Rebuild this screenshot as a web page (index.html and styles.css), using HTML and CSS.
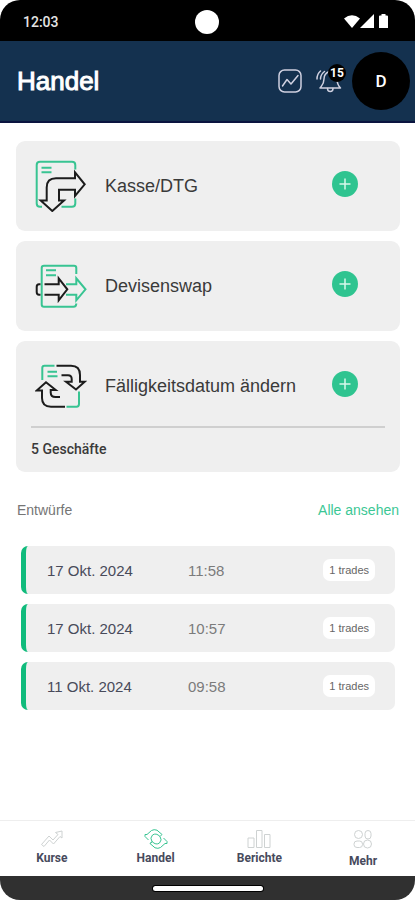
FILE: index.html
```html
<!DOCTYPE html>
<html lang="de">
<head>
<meta charset="utf-8">
<meta name="viewport" content="width=device-width, initial-scale=1">
<title>Handel</title>
<link rel="stylesheet" href="styles.css">
</head>
<body>
<div class="phone">
  <div class="status">
    <span class="clock">12:03</span>
    <span class="camera"></span>
    <svg class="signals" width="46" height="16" viewBox="0 0 46 16" fill="#fff">
      <path d="M0 4.500Q8 -2 16 4.500L8 14Z"/>
      <path d="M30 0V14H16Z"/>
      <path d="M35 2.500Q35 1.500 36 1.500H37.500V0H41.500V1.500H43Q44 1.500 44 2.500V14H35Z"/>
    </svg>
  </div>

  <header class="header">
    <h1>Handel</h1>
    <button class="icon-button" aria-label="Chart">
      <svg width="24" height="24" viewBox="0 0 24 24" fill="none" stroke="#cfd0e0" stroke-width="1.500" stroke-linecap="round" stroke-linejoin="round">
        <rect x="1" y="1" width="22" height="22" rx="5.500"/>
        <path d="M4.500 17L9 10.500L13 15L20 6.500"/>
      </svg>
    </button>
    <button class="icon-button bell" aria-label="Benachrichtigungen">
      <svg width="26" height="24" viewBox="0 0 26 24" fill="none" stroke="#cfd0e0" stroke-width="1.500" stroke-linecap="round" stroke-linejoin="round">
        <path d="M13 2.500C9.500 4 8 7 8 10C8 15 6.500 16 4 19H24.500C22 16.500 21 14.500 21 10"/>
        <path d="M11.500 19.500C11.500 23.500 17 23.500 17 19.500M4.500 2Q1 5 1 10M8.500 2.500Q4.500 5.500 4.500 10"/>
      </svg>
      <span class="badge">15</span>
    </button>
    <button class="avatar">D</button>
  </header>

  <main class="main">
    <section class="cards">
      <article class="card">
        <div class="card-row">
          <svg class="card-icon" width="52" height="52" viewBox="0 0 52 52">
            <path class="green" d="M40.300 9.500V5Q40.300 1.700 37 1.700H5Q1.700 1.700 1.700 5V43.500Q1.700 46.700 5 46.700H7M40.300 38.500V43.500Q40.300 46.700 37 46.700H26.500M6.500 7.700H16.500M6.500 12.300H16.500"/>
            <path class="black" d="M11.700 40.500V27.500Q11.700 18.300 21 18.300H40V12.300L49.700 24.300L40 36V29.700H24V40.500H29L17.300 51L5.700 40.500Z"/>
          </svg>
          <h2>Kasse/DTG</h2>
          <button class="add" aria-label="Kasse/DTG hinzufügen"><svg width="12" height="12" viewBox="0 0 12 12"><path d="M6 0.500V11.500M0.500 6H11.500"/></svg></button>
        </div>
      </article>

      <article class="card">
        <div class="card-row">
          <svg class="card-icon" width="52" height="52" viewBox="0 0 52 52">
            <path class="green" d="M41.300 14V8Q41.300 5.700 39 5.700H9Q6.700 5.700 6.700 8V44.500Q6.700 46.700 9 46.700H38.500Q41.300 46.700 41.300 43.500M11 10.300H21M11 15.300H21"/>
            <path class="green" d="M31 24.300H41.300V18.300L50.500 29.300L41.300 40.300V34.700H31"/>
            <path class="black" d="M9.500 24.300H23.700V18.300L32.300 29.300L23.700 40.300V34.700H9.500M5.500 24.300H4Q1.700 24.300 1.700 27V32Q1.700 34.700 4 34.700H5.500"/>
          </svg>
          <h2>Devisenswap</h2>
          <button class="add" aria-label="Devisenswap hinzufügen"><svg width="12" height="12" viewBox="0 0 12 12"><path d="M6 0.500V11.500M0.500 6H11.500"/></svg></button>
        </div>
      </article>

      <article class="card">
        <div class="card-row">
          <svg class="card-icon" width="52" height="52" viewBox="0 0 52 52">
            <path class="green" d="M7.300 20V8Q7.300 5.700 9.500 5.700H19.500M12.500 11.700H22M12.500 16.300H22.500M31.500 46.700H41.500Q44 46.700 44 44V31.500"/>
            <path class="black" d="M21.500 5.700H36Q45 5.700 45 15V21.700H49.700L41 29.500L31 21.700H36.700V19Q36.700 15.300 33 15.300H26.500"/>
            <path class="black" d="M25 37H20.500Q15.700 37 15.700 32.500V30H20.700L11 22.300L1.700 30.500H7V38Q7 46.700 16 46.700H30"/>
          </svg>
          <h2>Fälligkeitsdatum ändern</h2>
          <button class="add" aria-label="Fälligkeitsdatum ändern hinzufügen"><svg width="12" height="12" viewBox="0 0 12 12"><path d="M6 0.500V11.500M0.500 6H11.500"/></svg></button>
        </div>
        <p class="card-foot">5 Geschäfte</p>
      </article>
    </section>

    <div class="drafts-head">
      <h3>Entwürfe</h3>
      <a href="#">Alle ansehen</a>
    </div>

    <ul class="drafts">
      <li><span class="date">17 Okt. 2024</span><span class="time">11:58</span><span class="pill">1 trades</span></li>
      <li><span class="date">17 Okt. 2024</span><span class="time">10:57</span><span class="pill">1 trades</span></li>
      <li><span class="date">11 Okt. 2024</span><span class="time">09:58</span><span class="pill">1 trades</span></li>
    </ul>
  </main>

  <nav class="nav">
    <a href="#">
      <svg width="24" height="20" viewBox="0 0 24 20"><path d="M1.500 15.500L9 7L13 11L18 5.500L15.500 3.500L22 2V9L20 7.500L13.500 15L9.500 11L4 17.500Z"/></svg>
      Kurse
    </a>
    <a href="#" class="active">
      <svg width="24" height="20" viewBox="0 0 24 20"><path d="M4.500 11L1 7.500V5.500H3L7.500 1.500Q10 0 13 1.200L18 5.500L16 7.500Q12 3.500 8.500 6Q5.500 9 8 12.500L6.500 14.500M19.500 9L23 12.500V14.500H21L16.500 18.500Q14 20 11 18.800L6 14.500L8 12.500Q12 16.500 15.500 14Q18.500 11 16 7.500"/></svg>
      Handel
    </a>
    <a href="#">
      <svg width="24" height="20" viewBox="0 0 24 20"><path d="M1 9H7V18.500H1ZM9.500 1.500H15V18.500H9.500ZM17.500 5.500H23V18.500H17.500Z"/></svg>
      Berichte
    </a>
    <a href="#">
      <svg width="20" height="23" viewBox="0 0 20 23"><circle cx="5.500" cy="5.500" r="4"/><rect x="12" y="1.500" width="6" height="8.500" rx="3"/><rect x="1" y="12" width="8.500" height="6.500" rx="3"/><circle cx="14.500" cy="15" r="4"/></svg>
      Mehr
    </a>
  </nav>
  <div class="gesture"><span></span></div>
</div>
</body>
</html>
```

FILE: styles.css
```css
* {
  box-sizing: border-box;
}

body {
  margin: 0;
  background: #fff;
  font-family: "Liberation Sans", Arial, sans-serif;
}

h1, h2, h3, p, ul {
  margin: 0;
  padding: 0;
  font-weight: 400;
}

button {
  border: 0;
  padding: 0;
  background: none;
  font: inherit;
}

a {
  text-decoration: none;
}

svg {
  display: block;
}

.phone {
  display: flex;
  flex-direction: column;
  min-height: 100vh;
  border-radius: 20px;
  overflow: hidden;
}

.status {
  display: grid;
  grid-template-columns: 1fr auto 1fr;
  align-items: center;
  height: 41px;
  padding: 2px 25px 0 23px;
  background: #000;
  color: #e4e4e4;
}

.clock {
  font: 500 14px Roboto, sans-serif;
}

.camera {
  width: 24px;
  height: 24px;
  border-radius: 50%;
  background: #fff;
}

.signals {
  justify-self: end;
}

.header {
  display: flex;
  align-items: center;
  height: 82px;
  padding: 0 5px 0 17px;
  background: #14314f;
  border-bottom: 2px solid #0a1440;
  color: #fff;
}

.header h1 {
  flex: 1;
  font-size: 26px;
  line-height: 32px;
  -webkit-text-stroke: 1px #fff;
}

.icon-button {
  position: relative;
  margin-right: 14px;
}

.bell {
  margin-right: 10px;
}

.badge {
  position: absolute;
  top: -5px;
  right: -4px;
  width: 18px;
  height: 18px;
  border-radius: 50%;
  background: #000;
  color: #fff;
  font: 700 12px/18px Roboto, sans-serif;
  text-align: center;
}

.avatar {
  width: 58px;
  height: 58px;
  border-radius: 50%;
  background: #000;
  color: #fff;
  font: 500 17px Roboto, sans-serif;
}

.main {
  flex: 1;
  padding: 18px 15px 18px 16px;
}

.cards {
  display: grid;
  gap: 10px;
}

.card {
  padding: 0 15px;
  border-radius: 9px;
  background: #efefef;
}

.card-row {
  display: flex;
  align-items: center;
  height: 90px;
  padding: 0 27px 0 4px;
}

.card h2 {
  flex: 1;
  padding-left: 18px;
  color: #3a3a3a;
  font-size: 18px;
  line-height: 24px;
}

.card-icon path {
  fill: none;
  stroke-width: 2;
}

.card-icon .green {
  stroke: #38c492;
}

.card-icon .black {
  stroke: #1c1c1c;
}

.add {
  display: grid;
  place-items: center;
  width: 26px;
  height: 26px;
  margin-bottom: 4px;
  border-radius: 50%;
  background: #2fc490;
}

.add path {
  stroke: #d9f8ea;
  stroke-width: 1.5;
}

.card-foot {
  margin-top: -5px;
  padding-bottom: 1px;
  border-top: 2px solid #cfcfcf;
  color: #3a3a3a;
  font: 500 14px/43px Roboto, sans-serif;
}

.drafts-head {
  display: flex;
  justify-content: space-between;
  padding: 28px 1px 0;
  color: #757575;
  font-size: 14px;
  line-height: 20px;
}

.drafts-head h3 {
  font-size: 14px;
}

.drafts-head a {
  color: #3cc795;
}

.drafts {
  display: grid;
  gap: 10px;
  padding: 26px 5px 0;
  list-style: none;
}

.drafts li {
  display: flex;
  align-items: center;
  height: 48px;
  padding: 0 20px 0 21px;
  border-left: 5px solid #10bb7c;
  border-radius: 7px;
  background: #efefef;
  font-size: 15px;
}

.date {
  width: 141px;
  color: #484a5a;
}

.time {
  flex: 1;
  color: #7b7b7b;
}

.pill {
  padding: 0 6px;
  border-radius: 7px;
  background: #fff;
  color: #666;
  font-size: 11px;
  line-height: 22px;
}

.nav {
  display: grid;
  grid-template-columns: repeat(4, 1fr);
  height: 56px;
  padding-top: 8px;
  border-top: 1px solid #eee;
  background: #fff;
}

.nav a {
  display: flex;
  flex-direction: column;
  align-items: center;
  color: #474a5c;
  font: 700 12px/18px Roboto, sans-serif;
}

.nav path, .nav circle, .nav rect {
  fill: none;
  stroke: #ced2d2;
  stroke-width: 1;
}

.nav .active path {
  stroke: #38c492;
}

.gesture {
  display: flex;
  justify-content: center;
  height: 24px;
  padding-top: 10px;
  background: #303030;
}

.gesture span {
  width: 110px;
  height: 5px;
  border-radius: 3px;
  background: #fff;
  box-shadow: 0 0 0 1px #000;
}
```
